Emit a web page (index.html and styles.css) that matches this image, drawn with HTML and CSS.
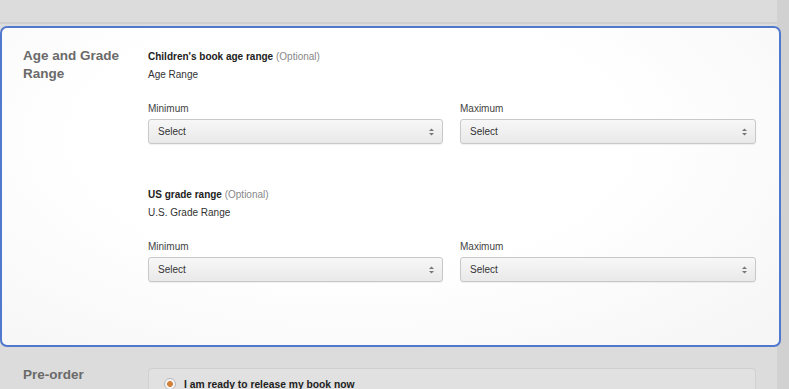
FILE: index.html
```html
<!DOCTYPE html>
<html lang="en">
<head>
  <meta charset="UTF-8" />
  <title>Age and Grade Range</title>
  <meta name="viewport" content="width=device-width, initial-scale=1.0" />
  <link rel="stylesheet" href="styles.css">
</head>
<body>
  <div class="topbar"></div>

  <section class="card">
    <h2 class="section-title">Age and Grade Range</h2>
    <div class="fields">
      <div class="group">
        <div class="group-title">Children's book age range <span class="optional">(Optional)</span></div>
        <div class="group-sub">Age Range</div>
        <div class="pair">
          <div class="field">
            <div class="label">Minimum</div>
            <div class="select"><span>Select</span><svg width="5" height="8" viewBox="0 0 5 8"><polygon points="0,3 2.5,0.5 5,3" /><polygon points="0,5 2.5,7.5 5,5" /></svg></div>
          </div>
          <div class="field">
            <div class="label">Maximum</div>
            <div class="select"><span>Select</span><svg width="5" height="8" viewBox="0 0 5 8"><polygon points="0,3 2.5,0.5 5,3" /><polygon points="0,5 2.5,7.5 5,5" /></svg></div>
          </div>
        </div>
      </div>

      <div class="group second">
        <div class="group-title">US grade range <span class="optional">(Optional)</span></div>
        <div class="group-sub">U.S. Grade Range</div>
        <div class="pair">
          <div class="field">
            <div class="label">Minimum</div>
            <div class="select"><span>Select</span><svg width="5" height="8" viewBox="0 0 5 8"><polygon points="0,3 2.5,0.5 5,3" /><polygon points="0,5 2.5,7.5 5,5" /></svg></div>
          </div>
          <div class="field">
            <div class="label">Maximum</div>
            <div class="select"><span>Select</span><svg width="5" height="8" viewBox="0 0 5 8"><polygon points="0,3 2.5,0.5 5,3" /><polygon points="0,5 2.5,7.5 5,5" /></svg></div>
          </div>
        </div>
      </div>
    </div>
  </section>

  <section class="row">
    <h2 class="section-title">Pre-order</h2>
    <div class="option-box">
      <span class="radio"></span>
      <span class="option-text">I am ready to release my book now</span>
    </div>
  </section>
</body>
</html>
```

FILE: styles.css
```css
html, body {
  height: 100%;
}
body {
  margin: 0;
  overflow: hidden;
  font-family: "Liberation Sans", Arial, sans-serif;
  color: #333;
  background: linear-gradient(to right, #dcdcdc 777px, #d1d1d1 777px);
}
.topbar {
  height: 22px;
  border-bottom: 2px solid #d0d0d0;
  margin-bottom: 2px;
  width: 777px;
}
.card {
  display: flex;
  width: 733px;
  padding: 19px 23px 63px 21px;
  border: 2px solid #5078cc;
  border-radius: 7px;
  background: radial-gradient(ellipse at 45% 35%, #ffffff 45%, #f5f5f5 100%);
}
.section-title {
  width: 125px;
  flex: none;
  margin: 0;
  font-size: 13.5px;
  line-height: 18px;
  font-weight: bold;
  color: #6a6a6a;
}
.fields {
  width: 608px;
  margin-top: 3px;
}
.group-title {
  font-size: 10px;
  line-height: 14px;
  font-weight: bold;
  color: #222;
}
.optional {
  font-weight: normal;
  color: #888;
}
.group-sub {
  margin-top: 4px;
  font-size: 10px;
  line-height: 14px;
  color: #333;
}
.second {
  margin-top: 44px;
}
.pair {
  display: grid;
  grid-template-columns: 295px 296px;
  column-gap: 17px;
  margin-top: 20px;
}
.label {
  font-size: 10px;
  line-height: 14px;
  color: #444;
  margin-bottom: 3px;
}
.select {
  box-sizing: border-box;
  height: 25px;
  display: flex;
  align-items: center;
  justify-content: space-between;
  padding: 0 8px 0 9px;
  border: 1px solid #c8c8c8;
  border-radius: 3px;
  background: linear-gradient(#f7f7f7, #e9e9e9);
  box-shadow: 0 1px 1px rgba(0, 0, 0, 0.06);
  font-size: 10px;
  color: #333;
}
.select svg {
  fill: #777;
}
.row {
  display: flex;
  padding: 19px 0 0 23px;
  width: 754px;
}
.option-box {
  box-sizing: border-box;
  width: 608px;
  height: 40px;
  margin-top: 2px;
  display: flex;
  align-items: flex-start;
  padding: 9px 0 0 15px;
  border: 1px solid #d0d0d0;
  border-radius: 4px;
  background: #e1e1e1;
}
.radio {
  box-sizing: border-box;
  width: 12px;
  height: 12px;
  border: 1px solid #b8b8b8;
  border-radius: 50%;
  background: radial-gradient(circle, #d2803a 2.6px, #f4f4f4 3.2px);
  margin-right: 8px;
}
.option-text {
  font-size: 10.3px;
  line-height: 13px;
  font-weight: bold;
  color: #222;
}
```
